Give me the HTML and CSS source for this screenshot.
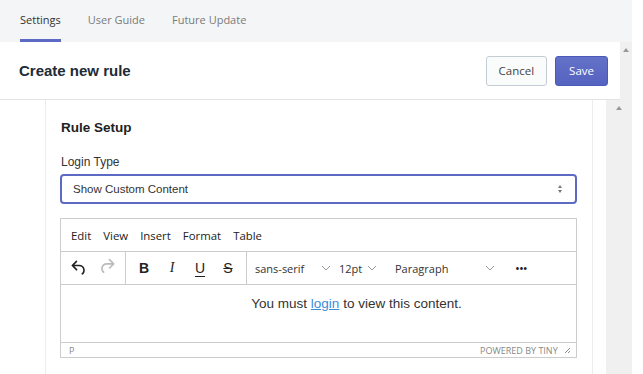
FILE: index.html
```html
<!DOCTYPE html>
<html lang="en">
<head>
    <meta charset="UTF-8">
    <title>Create new rule</title>
    <link rel="stylesheet" href="styles.css">
</head>
<body>
<div class="app">
    <div class="tabs">
        <div class="tab active">Settings</div>
        <div class="tab">User Guide</div>
        <div class="tab">Future Update</div>
    </div>

    <div class="top-row">
        <div class="header">
            <h1>Create new rule</h1>
            <div class="actions">
                <button class="btn">Cancel</button>
                <button class="btn primary">Save</button>
            </div>
        </div>
        <div class="track track-top"><span class="arrow"></span></div>
    </div>

    <div class="main-row">
        <div class="content">
            <div class="card">
                <h3>Rule Setup</h3>
                <label class="label">Login Type</label>
                <div class="select">
                    <span>Show Custom Content</span>
                    <span class="updown"><i class="up"></i><i class="down"></i></span>
                </div>

                <div class="editor">
                    <div class="menubar">
                        <span>Edit</span>
                        <span>View</span>
                        <span>Insert</span>
                        <span>Format</span>
                        <span>Table</span>
                    </div>
                    <div class="toolbar">
                        <div class="group">
                            <span class="tool">
                                <svg width="20" height="20" viewBox="0 0 24 24"><path d="M6.4 8H12c3.7 0 6.2 2 6.8 5.1.6 2.7-.4 5.6-2.3 6.8a1 1 0 0 1-1-1.8c1.1-.6 1.8-2.7 1.4-4.6-.5-2.1-2.1-3.5-4.9-3.5H6.4l3.3 3.3a1 1 0 1 1-1.4 1.4l-5-5a1 1 0 0 1 0-1.4l5-5a1 1 0 0 1 1.4 1.4L6.4 8z" fill="#222"/></svg>
                            </span>
                            <span class="tool disabled">
                                <svg width="20" height="20" viewBox="0 0 24 24"><path d="M17.6 10H12c-2.8 0-4.4 1.4-4.9 3.5-.4 2 .3 4 1.4 4.6a1 1 0 1 1-1 1.8c-2-1.2-2.9-4.1-2.3-6.8.6-3 3-5.1 6.8-5.1h5.6l-3.3-3.3a1 1 0 1 1 1.4-1.4l5 5a1 1 0 0 1 0 1.4l-5 5a1 1 0 0 1-1.4-1.4l3.3-3.3z" transform="translate(0 -2)" fill="#bbb"/></svg>
                            </span>
                        </div>
                        <div class="group">
                            <span class="tool fmt bold">B</span>
                            <span class="tool fmt italic">I</span>
                            <span class="tool fmt under">U</span>
                            <span class="tool fmt strike">S</span>
                        </div>
                        <div class="group picks">
                            <span class="pick w-font">sans-serif <svg class="chev" width="10" height="6" viewBox="0 0 10 6"><path d="M1 1l4 4 4-4" fill="none" stroke="#999" stroke-width="1"/></svg></span>
                            <span class="pick w-size">12pt <svg class="chev" width="10" height="6" viewBox="0 0 10 6"><path d="M1 1l4 4 4-4" fill="none" stroke="#999" stroke-width="1"/></svg></span>
                            <span class="pick w-block">Paragraph <svg class="chev" width="10" height="6" viewBox="0 0 10 6"><path d="M1 1l4 4 4-4" fill="none" stroke="#999" stroke-width="1"/></svg></span>
                            <span class="more">&bull;&bull;&bull;</span>
                        </div>
                    </div>
                    <div class="body">
                        <p>You must <a href="#">login</a> to view this content.</p>
                    </div>
                    <div class="statusbar">
                        <span>P</span>
                        <span class="brand">POWERED BY TINY
                            <svg width="8" height="8" viewBox="0 0 8 8"><path d="M7 2L2 7M7 5L5 7" stroke="#888" stroke-width="1"/></svg>
                        </span>
                    </div>
                </div>
            </div>
        </div>
        <div class="track track-main"><span class="arrow"></span></div>
    </div>
</div>
</body>
</html>
```

FILE: styles.css
```css
body {
    margin: 0;
    background: #fff;
    font-family: "Open Sans", "Noto Sans", sans-serif;
    color: #333;
}

.app {
    width: 632px;
    height: 374px;
    overflow: hidden;
}

/* Tabs */
.tabs {
    display: flex;
    gap: 27px;
    height: 42px;
    padding-left: 20px;
    background: #f4f5f7;
}

.tab {
    font-size: 11px;
    line-height: 39px;
    color: #7a7a7a;
    border-bottom: 3px solid transparent;
}

.tab.active {
    color: #333;
    border-bottom-color: #5c6ac4;
}

/* Header */
.top-row {
    display: flex;
}

.header {
    flex: 1;
    display: flex;
    align-items: center;
    justify-content: space-between;
    height: 57px;
    padding: 0 12px 0 19px;
    border-bottom: 1px solid #e3e3e3;
}

.header h1 {
    margin: 0;
    font-family: "Liberation Sans", Arial, sans-serif;
    font-size: 15px;
    font-weight: 600;
    color: #212b36;
}

.actions {
    display: flex;
    gap: 8px;
}

.btn {
    height: 30px;
    padding: 0 12px;
    border: 1px solid #c4cdd5;
    border-radius: 3px;
    background: #fafbfb;
    color: #444;
    font-family: "Open Sans", sans-serif;
    font-size: 11.5px;
}

.btn.primary {
    padding: 0 13px;
    border-color: #4b59b8;
    background: linear-gradient(#6371c7, #5563c1);
    color: #fff;
}

/* Fake scroll tracks */
.track {
    position: relative;
    background: #f0f0f0;
}

.track-top {
    width: 12px;
}

.track-main {
    width: 26px;
}

.track .arrow {
    position: absolute;
    top: 6px;
    left: 50%;
    margin-left: -3px;
    border: 3px solid transparent;
    border-bottom: 4px solid #999;
    border-top: 0;
}

/* Main content */
.main-row {
    display: flex;
    height: 274px;
}

.content {
    flex: 1;
    padding: 0 13px 0 45px;
}

.card {
    height: 100%;
    box-sizing: border-box;
    padding: 18px 15px 0 14px;
    border-left: 1px solid #ececec;
    border-right: 1px solid #ececec;
    font-family: "Liberation Sans", Arial, sans-serif;
}

.card h3 {
    margin: 0;
    font-size: 13.5px;
    line-height: 20px;
    font-weight: bold;
    color: #222;
    padding-left: 1px;
}

.label {
    display: block;
    margin-top: 16px;
    padding-left: 1px;
    font-size: 12px;
    line-height: 16px;
    color: #333;
}

.select {
    display: flex;
    align-items: center;
    justify-content: space-between;
    height: 30px;
    margin-top: 4px;
    padding: 0 11px;
    box-sizing: border-box;
    border: 2px solid #5c6ac4;
    border-radius: 4px;
    font-size: 11.5px;
    color: #333;
}

.updown {
    display: flex;
    flex-direction: column;
    gap: 2px;
    margin-right: 2px;
}

.updown i {
    width: 0;
    height: 0;
    border-left: 2.5px solid transparent;
    border-right: 2.5px solid transparent;
}

.updown .up {
    border-bottom: 3px solid #777;
}

.updown .down {
    border-top: 3px solid #777;
}

/* Editor */
.editor {
    margin-top: 14px;
    border: 1px solid #ccc;
}

.menubar {
    display: flex;
    gap: 12px;
    height: 32px;
    align-items: center;
    padding-left: 10px;
    font-family: "Open Sans", sans-serif;
    font-size: 11.4px;
    color: #222;
}

.toolbar {
    display: flex;
    height: 32px;
    border-top: 1px solid #ccc;
    border-bottom: 1px solid #ccc;
    font-family: "Open Sans", sans-serif;
}

.toolbar .group {
    display: flex;
    align-items: center;
    padding: 0 4px;
    border-right: 1px solid #ccc;
}

.toolbar .group.picks {
    border-right: 0;
}

.tool {
    display: flex;
    align-items: center;
    justify-content: center;
    width: 28px;
    height: 28px;
    color: #222;
}

.tool.fmt {
    font-size: 14px;
}

.bold {
    font-family: "Liberation Sans", Arial, sans-serif;
    font-weight: bold;
}

.italic {
    font-family: "Liberation Serif", serif;
    font-style: italic;
    font-size: 15px;
}

.under {
    font-family: "Liberation Sans", Arial, sans-serif;
    font-size: 12px;
    text-decoration: underline;
    text-underline-offset: 3px;
}

.strike {
    font-family: "Liberation Sans", Arial, sans-serif;
    text-decoration: line-through;
}

.pick {
    display: flex;
    align-items: center;
    padding: 0 4px;
    font-size: 11px;
    color: #333;
}

.w-font {
    width: 76px;
    justify-content: space-between;
}

.w-size {
    width: 48px;
}

.w-size .chev {
    margin-left: 5px;
}

.w-block {
    width: 100px;
    justify-content: space-between;
}

.chev {
    margin-left: 8px;
}

.more {
    margin-left: 16px;
    font-size: 13px;
    letter-spacing: -1px;
    color: #222;
}

.body {
    height: 57px;
    box-sizing: border-box;
    padding: 11px 0 0 76px;
}

.body p {
    margin: 0;
    text-align: center;
    font-size: 13.5px;
    color: #333;
}

.body a {
    color: #3a8ddb;
}

.statusbar {
    display: flex;
    justify-content: space-between;
    align-items: center;
    height: 14px;
    padding: 0 5px 0 8px;
    border-top: 1px solid #ccc;
    font-family: "Open Sans", sans-serif;
    font-size: 9px;
    color: #888;
}

.brand svg {
    margin-left: 3px;
}
```
